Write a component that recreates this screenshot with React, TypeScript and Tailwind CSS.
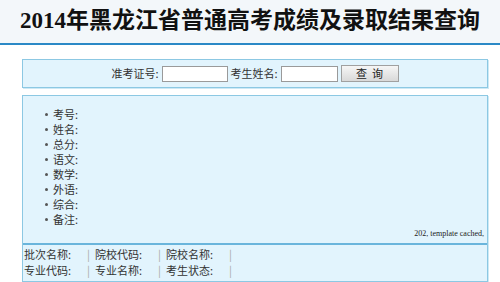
const cjk = { fontFamily: '"Noto Sans CJK SC", "Liberation Sans", sans-serif' };

const fields = ['考号', '姓名', '总分', '语文', '数学', '外语', '综合', '备注'];

const rows = [
  ['批次名称', '院校代码', '院校名称'],
  ['专业代码', '专业名称', '考生状态'],
];

export default function App() {
  return (
    <div className="w-[500px] h-[282px] bg-white overflow-hidden text-[#333]" style={cjk}>
      <div className="h-[45px] bg-[#f3f7fa] border-b-2 border-[#2b89c6] flex items-center justify-center">
        <h1
          className="text-[23px] font-bold text-[#111] leading-none mt-[-3px]"
          style={{ fontFamily: '"Liberation Serif", "Noto Sans CJK SC", serif' }}
        >
          2014年黑龙江省普通高考成绩及录取结果查询
        </h1>
      </div>

      <div className="ml-[22px] w-[466px] mt-[14px] h-[29px] border border-[#8cc8e3] bg-[#e2f4fd] shadow-[1px_1px_0_#cde9f5] flex items-center justify-center text-[11px]">
        <span>准考证号: </span>
        <input className="ml-[3px] w-[66px] h-[16px] border border-[#9a9a9a] bg-white" />
        <span className="ml-[3px]">考生姓名: </span>
        <input className="ml-[3px] w-[57px] h-[16px] border border-[#9a9a9a] bg-white" />
        <button className="ml-[3px] w-[58px] h-[17px] border border-[#a0a0a0] bg-gradient-to-b from-[#f6f6f6] to-[#d9d9d9] text-[11px] leading-none text-[#222]">
          查&nbsp;&nbsp;询
        </button>
      </div>

      <div className="ml-[22px] w-[466px] mt-[7px] border border-[#8cc8e3] bg-[#e2f4fd] shadow-[1px_1px_0_#cde9f5]">
        <div className="pt-[11px] pb-[4px]">
          <ul className="pl-[22px]">
            {fields.map((f) => (
              <li key={f} className="flex items-center h-[15px] text-[11px]">
                <span className="w-[3px] h-[3px] bg-[#555] rounded-full mr-[5px]" />
                <span>{f}:</span>
              </li>
            ))}
          </ul>
          <div
            className="text-right pr-[3px] text-[8px] leading-[11px] text-[#222] mt-[1px]"
            style={{ fontFamily: '"Liberation Serif", serif' }}
          >
            202, template cached,
          </div>
        </div>
        <div className="border-t-2 border-[#6ab5dc] pt-[1px] pb-[3px] pl-[1px] text-[11px]">
          {rows.map((r, i) => (
            <div key={i} className="flex h-[16px] items-center">
              {r.map((c) => (
                <div key={c} className="flex w-[71px]">
                  <span className="w-[63px]">{c}:</span>
                  <span className="text-[#aaa]">|</span>
                </div>
              ))}
            </div>
          ))}
        </div>
      </div>
    </div>
  );
}
